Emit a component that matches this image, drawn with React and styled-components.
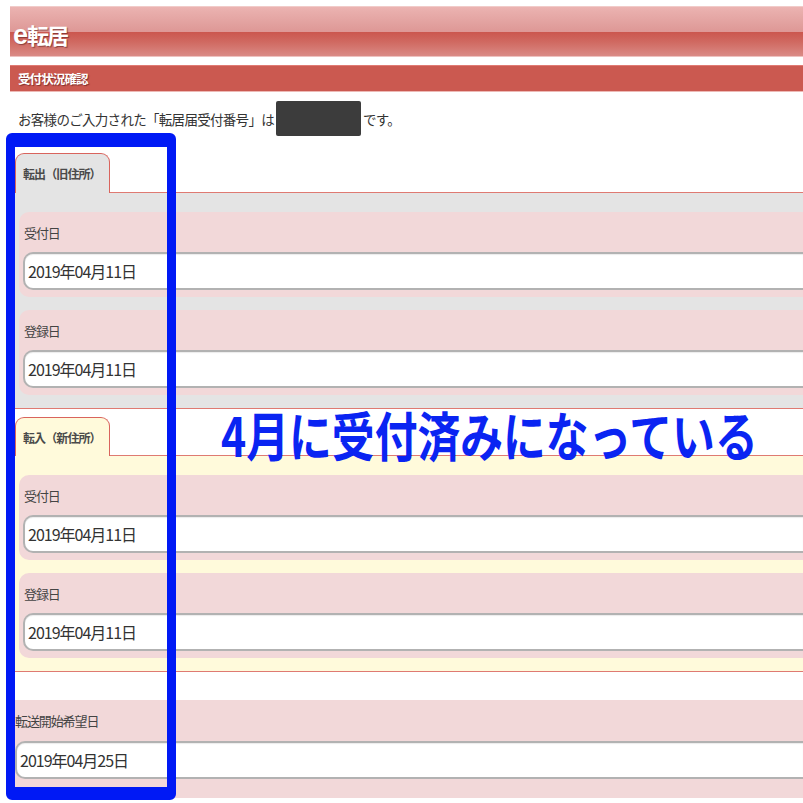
import styled, { createGlobalStyle } from 'styled-components';

const Global = createGlobalStyle`
    html, body {
        margin: 0;
        padding: 0;
        background: #FFFFFF;
    }
    body {
        font-family: "Noto Sans CJK JP", "Noto Sans", sans-serif;
        color: #333333;
    }
`;

const tones = {
    gray: '#E4E4E4',
    yellow: '#FFFADB',
};

const groups = [
    {
        tone: 'gray',
        label: '転出（旧住所）',
        fields: [
            { name: '受付日', value: '2019年04月11日' },
            { name: '登録日', value: '2019年04月11日' },
        ],
    },
    {
        tone: 'yellow',
        label: '転入（新住所）',
        fields: [
            { name: '受付日', value: '2019年04月11日' },
            { name: '登録日', value: '2019年04月11日' },
        ],
    },
];

export default function App() {
    return (
        <>
            <Global />
            <Page>
                <Header>
                    <Logo><LogoE>e</LogoE>転居</Logo>
                </Header>
                <SectionBar>受付状況確認</SectionBar>
                <Intro>
                    お客様のご入力された「転居届受付番号」は<Masked />です。
                </Intro>

                {groups.map((group, i) => (
                    <Group key={i} first={i === 0}>
                        <TabRow>
                            <Tab tone={group.tone} first={i === 0}>{group.label}</Tab>
                            <TabLine />
                        </TabRow>
                        <Panel tone={group.tone}>
                            {group.fields.map((field, j) => (
                                <Card key={j}>
                                    <Label>{field.name}</Label>
                                    <Field>{field.value}</Field>
                                </Card>
                            ))}
                        </Panel>
                    </Group>
                ))}

                <TransferCard>
                    <TransferLabel>転送開始希望日</TransferLabel>
                    <Field>2019年04月25日</Field>
                </TransferCard>

                <Frame />
                <Note>4月に受付済みになっている</Note>
            </Page>
        </>
    );
}

const Page = styled.div`
    position: relative;
    width: 803px;
    height: 803px;
    overflow: hidden;
    padding: 6px 0 0 10px;
    box-sizing: border-box;
`;

const Header = styled.div`
    height: 51px;
    box-sizing: border-box;
    display: flex;
    align-items: center;
    padding-left: 3px;
    border-top: 1px solid #F1CBC9;
    border-bottom: 1px solid #EDC2C0;
    background: linear-gradient(to bottom,
        #EBB3B1 0%, #DE9896 50%, #CB564E 51%, #D06A62 72%, #DA8A85 100%);
`;

const Logo = styled.div`
    font-size: 22px;
    font-weight: 700;
    color: #FFFFFF;
    letter-spacing: -2px;
    text-shadow: 1px 1px 1px rgba(90, 30, 30, 0.6);
    margin-top: 6px;
`;

const LogoE = styled.span`
    font-family: "Liberation Sans", sans-serif;
    font-size: 27px;
    letter-spacing: -1px;
`;

const SectionBar = styled.div`
    margin-top: 8px;
    height: 27px;
    box-sizing: border-box;
    display: flex;
    align-items: center;
    padding-left: 8px;
    background: #CB5950;
    border-top: 1px solid #E07A73;
    border-bottom: 1px solid #EDB9B5;
    color: #FFFFFF;
    font-size: 12.5px;
    font-weight: 700;
    letter-spacing: -0.9px;
    text-shadow: 1px 1px 1px rgba(80, 20, 20, 0.6);
`;

const Intro = styled.div`
    margin-top: 9px;
    height: 35px;
    display: flex;
    align-items: center;
    padding-left: 8px;
    font-size: 13.5px;
    letter-spacing: -0.7px;
    color: #333333;
`;

const Masked = styled.span`
    width: 85px;
    height: 35px;
    margin: 0 2px 0 2px;
    border-radius: 2px;
    background: #3C3C3C;
`;

const Group = styled.div`
    margin-top: ${({ first }) => (first ? '17px' : '8px')};
    margin-left: 5px;
`;

const TabRow = styled.div`
    display: flex;
    align-items: flex-end;
`;

const Tab = styled.div`
    width: 95px;
    height: ${({ first }) => (first ? '40px' : '39px')};
    box-sizing: border-box;
    display: flex;
    align-items: center;
    padding: 0 0 0 7px;
    border: 1px solid #D9645D;
    border-bottom: none;
    border-radius: 9px 9px 0 0;
    background: ${({ tone }) => tones[tone]};
    font-size: 12px;
    font-weight: 700;
    letter-spacing: -0.9px;
    color: #4A4A4A;
`;

const TabLine = styled.div`
    flex: 1;
    border-bottom: 1px solid #DF7A72;
`;

const Panel = styled.div`
    display: flex;
    flex-direction: column;
    gap: 13px;
    padding: 19px 0 13px 4px;
    background: ${({ tone }) => tones[tone]};
    border-bottom: 1px solid #DF7A72;
`;

const Card = styled.div`
    padding: 12px 0 7px 4px;
    border-radius: 10px 0 0 10px;
    background: #F2D8D9;
`;

const Label = styled.div`
    height: 18px;
    line-height: 18px;
    margin-bottom: 10px;
    padding-left: 1px;
    font-size: 13px;
    letter-spacing: -1.1px;
    color: #444444;
`;

const Field = styled.div`
    height: 38px;
    box-sizing: border-box;
    display: flex;
    align-items: center;
    padding-left: 3px;
    border: 2px solid #B2B2B2;
    border-right: none;
    border-radius: 10px 0 0 10px;
    background: #FFFFFF;
    box-shadow: inset 0 1px 1px rgba(0, 0, 0, 0.08);
    font-size: 16px;
    letter-spacing: -1px;
    color: #333333;
`;

const TransferCard = styled.div`
    margin-top: 28px;
    margin-left: 5px;
    padding: 12px 0 19px 0;
    background: #F2D8D9;
`;

const TransferLabel = styled(Label)`
    margin-bottom: 11px;
    padding-left: 0;
`;

const Frame = styled.div`
    position: absolute;
    left: 6px;
    top: 133px;
    width: 170px;
    height: 667px;
    box-sizing: border-box;
    border-style: solid;
    border-color: #0019F5;
    border-width: 14px 9px 13px 9px;
    border-radius: 6px;
`;

const Note = styled.div`
    position: absolute;
    left: 221px;
    top: 407px;
    font-size: 42.8px;
    line-height: 1;
    font-weight: 700;
    color: #0A24F2;
    white-space: nowrap;
    transform: scaleY(1.25);
    transform-origin: top left;
`;
